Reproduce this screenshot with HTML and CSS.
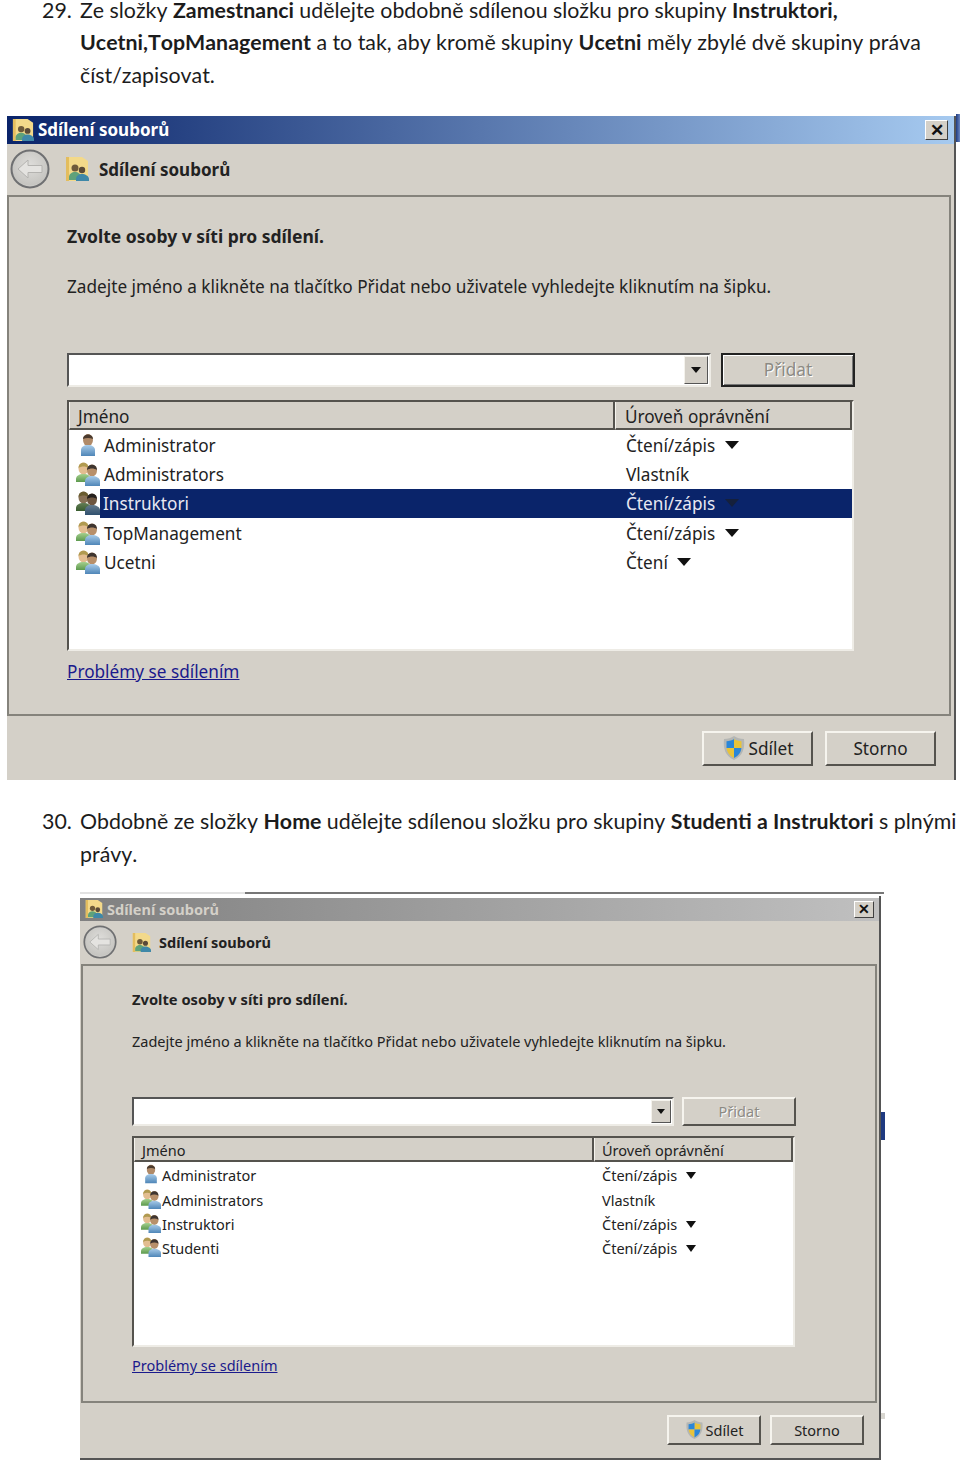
FILE: index.html
```html
<!DOCTYPE html>
<html lang="cs">

<head>
    <meta charset="UTF-8">
    <title>Sdílení souborů</title>
    <link rel="stylesheet" href="styles.css">
</head>

<body>
    <svg class="defs" width="0" height="0" aria-hidden="true">
        <defs>
            <linearGradient id="shirt" x1="0" y1="0" x2="0" y2="1">
                <stop offset="0" stop-color="#a8cbe8" />
                <stop offset="1" stop-color="#4f86b8" />
            </linearGradient>
            <linearGradient id="shirtGreen" x1="0" y1="0" x2="0" y2="1">
                <stop offset="0" stop-color="#a5cf8e" />
                <stop offset="1" stop-color="#5d9a4e" />
            </linearGradient>
            <radialGradient id="ball" cx="0.5" cy="0.4" r="0.7">
                <stop offset="0" stop-color="#dedddA" />
                <stop offset="0.75" stop-color="#c6c5c1" />
                <stop offset="1" stop-color="#ecebe8" />
            </radialGradient>
            <symbol id="user" viewBox="0 0 24 24">
                <ellipse cx="12" cy="7" rx="5" ry="6" fill="#b08a68" />
                <path d="M7 6c0-6 10-6 10 0-3-1.500-7-1.500-10 0z" fill="#4a3a2e" />
                <path d="M5 23v-6c0-3 3-5 7-5s7 2 7 5v6z" fill="url(#shirt)" />
            </symbol>
            <symbol id="group" viewBox="0 0 24 24">
                <ellipse cx="7.500" cy="6.500" rx="5" ry="6" fill="#e2bd90" />
                <path d="M2.500 6c0-7 10-7 10 0-3-2-7-2-10 0z" fill="#b09a50" />
                <path d="M0 20v-3c0-3 3-5 7.500-5s7.500 2 7.500 5v3z" fill="url(#shirtGreen)" />
                <ellipse cx="16" cy="8.500" rx="5" ry="6" fill="#b8906a" />
                <path d="M11 8c0-7 10-7 10 0-3-2-7-2-10 0z" fill="#3e3530" />
                <path d="M9 24v-5c0-3 3-5 7-5s8 2 8 5v5z" fill="url(#shirt)" />
            </symbol>
            <symbol id="share" viewBox="0 0 24 24">
                <path d="M1 0h16l6 4v20H1z" fill="#f3d98a" />
                <path d="M1 0h3v24H1z" fill="#e3bd5e" />
                <circle cx="10" cy="11" r="3.500" fill="#6e5a3a" />
                <path d="M4 23v-3c0-3 3-5 6-5s6 2 6 5v3z" fill="#5fa27a" />
                <circle cx="17" cy="13" r="3.200" fill="#5a4a38" />
                <path d="M11 24v-2c0-3 3-5 6-5s7 2 7 5v2z" fill="#3f88a8" />
            </symbol>
            <symbol id="back" viewBox="0 0 40 40">
                <circle cx="20" cy="20" r="18.500" fill="url(#ball)" stroke="#6f7072" stroke-width="2" />
                <path d="M8 20l10-9v5.500h14v7H18V29z" fill="#e4e3e0" stroke="#b4b3b0" />
            </symbol>
            <symbol id="shield" viewBox="0 0 24 26">
                <path d="M12 1c3 2 6 3 10 3 1 9-1 17-10 21C3 21 1 13 2 4c4 0 7-1 10-3z" fill="#b4b6b4" />
                <path d="M12 4c2 1.500 4.500 2 7.500 2.300V13H12z" fill="#e8c33a" />
                <path d="M4.500 6.300C7.500 6 10 5.500 12 4v9H4.500z" fill="#2a86d8" />
                <path d="M4.600 13H12v10c-5-2.500-7-6-7.400-10z" fill="#e8c33a" />
                <path d="M12 13h7.400c-.4 4-2.400 7.500-7.400 10z" fill="#2a86d8" />
            </symbol>
        </defs>
    </svg>

    <ol class="steps">
        <li class="step">
            <span class="step-num">29.</span>
            <p>Ze složky <b>Zamestnanci</b> udělejte obdobně sdílenou složku pro skupiny <b>Instruktori,</b>
                <b>Ucetni,TopManagement</b> a to tak, aby kromě skupiny <b>Ucetni</b> měly zbylé dvě skupiny práva
                číst/zapisovat.</p>
        </li>
    </ol>

    <div class="shot shot-large">
        <span class="scrap scrap-edge"></span>
        <div class="dialog dialog-large">
            <div class="titlebar">
                <svg class="title-icon"><use href="#share" /></svg>
                <span class="title-text">Sdílení souborů</span>
                <span class="close">✕</span>
            </div>
            <div class="nav">
                <svg class="back"><use href="#back" /></svg>
                <svg class="nav-icon"><use href="#share" /></svg>
                <span class="nav-title">Sdílení souborů</span>
            </div>
            <div class="panel">
                <h2 class="heading">Zvolte osoby v síti pro sdílení.</h2>
                <p class="hint">Zadejte jméno a klikněte na tlačítko Přidat nebo uživatele vyhledejte kliknutím na šipku.</p>
                <div class="add-row">
                    <div class="combo"><span class="combo-btn"><i class="caret"></i></span></div>
                    <span class="btn btn-default btn-off">Přidat</span>
                </div>
                <div class="list">
                    <div class="list-head"><span class="col-name">Jméno</span><span class="col-perm">Úroveň oprávnění</span></div>
                    <div class="row">
                        <svg class="row-icon"><use href="#user" /></svg>
                        <div class="row-body"><span class="cell-name">Administrator</span><span class="cell-perm">Čtení/zápis <i class="caret"></i></span></div>
                    </div>
                    <div class="row">
                        <svg class="row-icon"><use href="#group" /></svg>
                        <div class="row-body"><span class="cell-name">Administrators</span><span class="cell-perm">Vlastník</span></div>
                    </div>
                    <div class="row row-selected">
                        <svg class="row-icon"><use href="#group" /></svg>
                        <div class="row-body"><span class="cell-name">Instruktori</span><span class="cell-perm">Čtení/zápis <i class="caret"></i></span></div>
                    </div>
                    <div class="row">
                        <svg class="row-icon"><use href="#group" /></svg>
                        <div class="row-body"><span class="cell-name">TopManagement</span><span class="cell-perm">Čtení/zápis <i class="caret"></i></span></div>
                    </div>
                    <div class="row">
                        <svg class="row-icon"><use href="#group" /></svg>
                        <div class="row-body"><span class="cell-name">Ucetni</span><span class="cell-perm">Čtení <i class="caret"></i></span></div>
                    </div>
                </div>
                <a class="link">Problémy se sdílením</a>
            </div>
            <div class="footer">
                <span class="btn btn-action"><svg class="shield"><use href="#shield" /></svg>Sdílet</span>
                <span class="btn btn-action">Storno</span>
            </div>
        </div>
    </div>

    <ol class="steps steps-next">
        <li class="step">
            <span class="step-num">30.</span>
            <p>Obdobně ze složky <b>Home</b> udělejte sdílenou složku pro skupiny <b>Studenti a Instruktori</b> s plnými
                právy.</p>
        </li>
    </ol>

    <div class="shot shot-small">
        <span class="scrap scrap-top"></span>
        <span class="scrap scrap-tab"></span>
        <span class="scrap scrap-grip"></span>
        <div class="dialog dialog-small">
            <div class="titlebar">
                <svg class="title-icon"><use href="#share" /></svg>
                <span class="title-text">Sdílení souborů</span>
                <span class="close">✕</span>
            </div>
            <div class="nav">
                <svg class="back"><use href="#back" /></svg>
                <svg class="nav-icon"><use href="#share" /></svg>
                <span class="nav-title">Sdílení souborů</span>
            </div>
            <div class="panel">
                <h2 class="heading">Zvolte osoby v síti pro sdílení.</h2>
                <p class="hint">Zadejte jméno a klikněte na tlačítko Přidat nebo uživatele vyhledejte kliknutím na šipku.</p>
                <div class="add-row">
                    <div class="combo"><span class="combo-btn"><i class="caret"></i></span></div>
                    <span class="btn btn-off">Přidat</span>
                </div>
                <div class="list">
                    <div class="list-head"><span class="col-name">Jméno</span><span class="col-perm">Úroveň oprávnění</span></div>
                    <div class="row">
                        <svg class="row-icon"><use href="#user" /></svg>
                        <div class="row-body"><span class="cell-name">Administrator</span><span class="cell-perm">Čtení/zápis <i class="caret"></i></span></div>
                    </div>
                    <div class="row">
                        <svg class="row-icon"><use href="#group" /></svg>
                        <div class="row-body"><span class="cell-name">Administrators</span><span class="cell-perm">Vlastník</span></div>
                    </div>
                    <div class="row">
                        <svg class="row-icon"><use href="#group" /></svg>
                        <div class="row-body"><span class="cell-name">Instruktori</span><span class="cell-perm">Čtení/zápis <i class="caret"></i></span></div>
                    </div>
                    <div class="row">
                        <svg class="row-icon"><use href="#group" /></svg>
                        <div class="row-body"><span class="cell-name">Studenti</span><span class="cell-perm">Čtení/zápis <i class="caret"></i></span></div>
                    </div>
                </div>
                <a class="link">Problémy se sdílením</a>
            </div>
            <div class="footer">
                <span class="btn btn-action"><svg class="shield"><use href="#shield" /></svg>Sdílet</span>
                <span class="btn btn-action">Storno</span>
            </div>
        </div>
    </div>
</body>

</html>
```

FILE: styles.css
```css
html,
body {
    margin: 0;
    padding: 0;
    background: #fff;
}

body {
    height: 1467px;
    overflow: hidden;
    font-family: "Lato", "Liberation Sans", sans-serif;
    color: #1c1c1c;
}

.defs {
    position: absolute;
}

.steps {
    list-style: none;
    margin: -6.4px 0 0;
    padding: 0;
    font-size: 21.35px;
    line-height: 32.6px;
    font-kerning: none;
}

.steps-next {
    margin-top: 25px;
}

.step {
    display: grid;
    grid-template-columns: 80px 1fr;
}

.step-num {
    padding-left: 42px;
}

.step p {
    margin: 0;
}

/* screenshots */
.shot {
    position: relative;
    font-family: "Noto Sans", "Open Sans", sans-serif;
    color: #222;
}

.shot-large {
    margin: 24.6px 0 0 7px;
}

.shot-small {
    margin: 25.8px 0 0 80px;
}

.dialog-large {
    --title-h: 28px;
    --nav-h: 51px;
    --title-size: 17px;
    --text-size: 17.2px;
    --line: 24px;
    --row-h: 29.3px;
    --head-h: 28px;
    --icon: 24px;
    width: 947px;
    height: 664px;
}

.dialog-small {
    --title-h: 25px;
    --nav-h: 43px;
    --title-size: 14.500px;
    --text-size: 14.500px;
    --line: 20px;
    --row-h: 24.4px;
    --head-h: 24px;
    --icon: 20px;
    width: 801px;
    height: 564px;
}

.dialog {
    display: flex;
    flex-direction: column;
    background: #d4d0c8;
    border-right: 2px solid #555;
}

.dialog-small {
    border-bottom: 2px solid #555;
    box-sizing: border-box;
}

.titlebar {
    display: flex;
    align-items: center;
    flex: none;
    height: var(--title-h);
    padding: 0 6px 0 5px;
    background: linear-gradient(90deg, #0a246a, #a6caf0);
    color: #fff;
    font-size: var(--title-size);
    font-weight: 700;
}

.dialog-small .titlebar {
    padding-right: 5px;
    background: linear-gradient(90deg, #808080, #c0c0c0);
    border-top: 2px solid #fff;
    box-sizing: border-box;
    color: #d4d0c8;
}

.title-icon {
    flex: none;
    width: 22px;
    height: 22px;
    margin-right: 4px;
}

.dialog-small .title-icon {
    width: 18px;
    height: 18px;
}

.title-text {
    flex: 1;
}

.close {
    display: flex;
    align-items: center;
    justify-content: center;
    box-sizing: border-box;
    width: 23px;
    height: 20px;
    background: #d4d0c8;
    border: 1px solid;
    border-color: #fff #404040 #404040 #fff;
    color: #111;
    font-size: 17px;
    font-weight: 700;
    line-height: 1;
}

.dialog-small .close {
    width: 20px;
    height: 17px;
    font-size: 14px;
}

.nav {
    display: flex;
    align-items: center;
    flex: none;
    height: var(--nav-h);
    padding-left: 3px;
    font-size: var(--title-size);
    font-weight: 700;
}

.back {
    width: 40px;
    height: 40px;
    margin-right: 15px;
}

.dialog-small .back {
    width: 34px;
    height: 34px;
}

.nav-icon {
    width: 24px;
    height: 24px;
    margin-right: 10px;
}

.dialog-small .nav-icon {
    width: 19px;
    height: 19px;
    margin-right: 8px;
}

.panel {
    flex: 1;
    box-sizing: border-box;
    margin-right: 3px;
    border: 2px solid #85837c;
    font-size: var(--text-size);
    line-height: var(--line);
}

.dialog-large .panel {
    padding: 27px 0 0 58px;
}

.dialog-small .panel {
    margin-left: 1px;
    margin-right: 2px;
    padding: 23px 0 0 49px;
}

.heading {
    margin: 0;
    font-size: 17.5px;
    font-weight: 700;
}

.dialog-small .heading {
    font-size: 14.700px;
}

.hint {
    margin: 27px 0 0;
}

.dialog-small .hint {
    margin-top: 22px;
}

.add-row {
    display: flex;
    margin-top: 54px;
}

.dialog-large .add-row {
    gap: 10px;
    width: 788px;
    height: 34px;
}

.dialog-small .add-row {
    gap: 8px;
    width: 664px;
    height: 29px;
    margin-top: 46px;
}

.combo {
    display: flex;
    flex: 1;
    justify-content: flex-end;
    box-sizing: border-box;
    padding: 1px;
    background: #fff;
    border: 2px solid;
    border-color: #555 #eeece6 #eeece6 #555;
}

.combo-btn {
    display: flex;
    align-items: center;
    justify-content: center;
    width: 22px;
    background: #d4d0c8;
    border: 1px solid;
    border-color: #f4f2ec #555 #555 #f4f2ec;
}

.dialog-small .combo-btn {
    width: 18px;
}

.caret {
    display: inline-block;
    width: 0;
    height: 0;
    border-style: solid;
    border-color: #111 transparent transparent;
    border-width: 8px 7px 0;
    vertical-align: 3px;
    margin-left: 5px;
}

.dialog-small .caret {
    border-width: 7px 5.500px 0;
    vertical-align: 2px;
    margin-left: 5px;
}

.combo-btn .caret {
    margin: 0;
    border-width: 6px 5px 0;
}

.dialog-small .combo-btn .caret {
    margin: 0;
    border-width: 5px 4px 0;
}

.btn {
    display: flex;
    align-items: center;
    justify-content: center;
    box-sizing: border-box;
    background: #d4d0c8;
    border: 2px solid;
    border-color: #f6f4ee #55534e #55534e #f6f4ee;
    color: #222;
}

.btn-off {
    color: #8c8a84;
    text-shadow: 1px 1px 0 #fff;
}

.dialog-large .btn-off {
    width: 134px;
}

.dialog-small .btn-off {
    width: 114px;
}

.btn-default {
    border: 2px solid #222;
    box-shadow: inset 1px 1px 0 #fff, inset -1px -1px 0 #777;
}

.list {
    display: flex;
    flex-direction: column;
    box-sizing: border-box;
    background: #fff;
    border: 2px solid;
    border-color: #55534e #eeece6 #eeece6 #55534e;
}

.dialog-large .list {
    width: 787px;
    height: 251px;
    margin-top: 13px;
}

.dialog-small .list {
    width: 663px;
    height: 211px;
    margin-top: 10px;
}

.list-head {
    display: flex;
    flex: none;
    height: var(--head-h);
    box-sizing: border-box;
    background: #d4d0c8;
    line-height: calc(var(--head-h) + 1px);
}

.col-name,
.col-perm {
    box-sizing: border-box;
    border-bottom: 2px solid #55534e;
    border-right: 2px solid #55534e;
    border-left: 1px solid #f6f4ee;
}

.col-perm {
    flex: 1;
}

.dialog-large .col-name {
    width: 546px;
    padding-left: 8px;
}

.dialog-large .col-perm {
    padding-left: 9px;
}

.dialog-small .col-name {
    width: 460px;
    padding-left: 7px;
}

.dialog-small .col-perm {
    padding-left: 7px;
}

.row {
    display: flex;
    align-items: center;
    flex: none;
    height: var(--row-h);
}

.row-icon {
    flex: none;
    width: var(--icon);
    height: var(--icon);
    margin-left: 7px;
}

.row-body {
    display: flex;
    flex: 1;
    align-items: center;
    box-sizing: border-box;
    height: 100%;
    padding: 2px 0 0 4px;
}

.dialog-small .row-body {
    padding-left: 1px;
}

.dialog-large .cell-name {
    width: 522px;
}

.dialog-small .cell-name {
    width: 440px;
}

.row-selected .row-body {
    padding-left: 3px;
    background: #0a246a;
    color: #e8e8f2;
}

.row-selected .cell-name {
    width: 523px;
}

.row-selected .row-icon {
    filter: brightness(0.6);
}

.row-selected .caret {
    border-top-color: #15203c;
}

.link {
    display: block;
    width: max-content;
    margin-top: 8px;
    color: #1a1a8c;
    text-decoration: underline;
}

.dialog-large .link {
    margin-top: 9px;
}

.footer {
    display: flex;
    flex: none;
    justify-content: flex-end;
    box-sizing: border-box;
    font-size: var(--text-size);
}

.dialog-large .footer {
    gap: 12px;
    height: 64px;
    padding: 15px 18px 0 0;
}

.dialog-small .footer {
    gap: 9px;
    height: 55px;
    padding: 12px 15px 0 0;
}

.dialog-large .btn-action {
    width: 111px;
    height: 35px;
}

.dialog-small .btn-action {
    width: 94px;
    height: 30px;
}

.shield {
    width: 24px;
    height: 26px;
    margin-right: 3px;
}

.dialog-small .shield {
    width: 19px;
    height: 21px;
    margin-right: 2px;
}

/* leftovers of the window behind each dialog */
.scrap {
    position: absolute;
}

.scrap-edge {
    top: -2px;
    left: 949px;
    width: 4px;
    height: 28px;
    background: linear-gradient(90deg, #1f3a80, #6a86c0);
}

.scrap-top {
    top: -4px;
    left: 0;
    width: 804px;
    height: 2px;
    background: linear-gradient(90deg, #e2e2e2 165px, #777 165px);
}

.scrap-tab {
    top: 216px;
    left: 801px;
    width: 4px;
    height: 28px;
    background: #1f3a80;
}

.scrap-grip {
    top: 517px;
    left: 801px;
    width: 4px;
    height: 6px;
    background: #d8d6d0;
}
```
